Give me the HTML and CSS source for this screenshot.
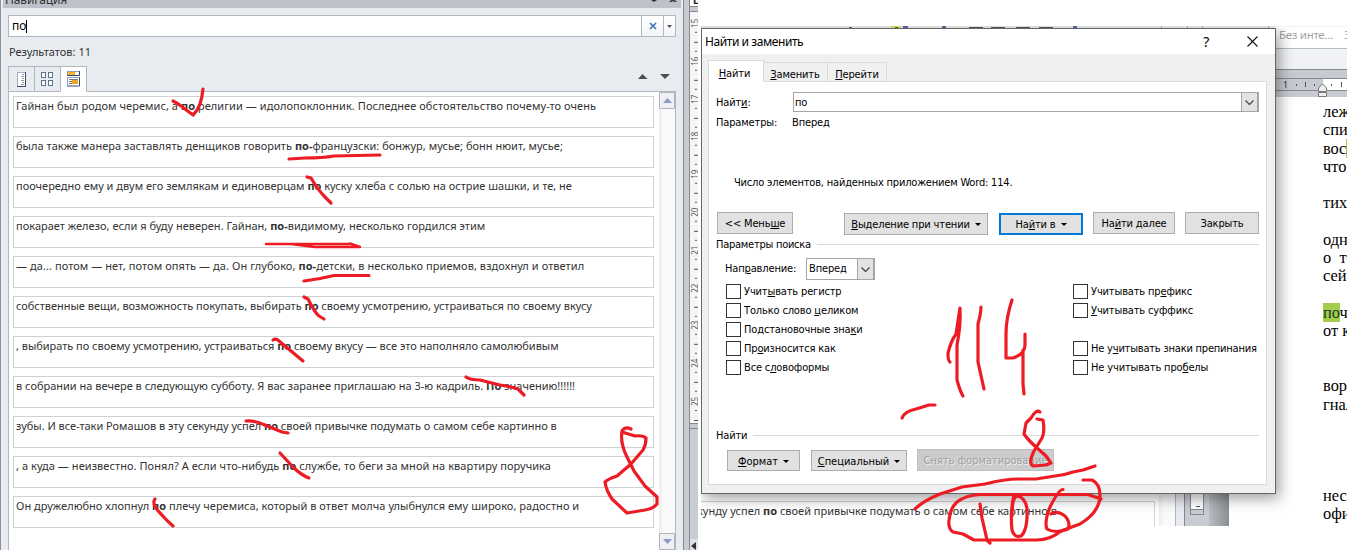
FILE: index.html
```
<!DOCTYPE html>
<html lang="ru">
<head>
<meta charset="utf-8">
<title>Найти и заменить</title>
<link rel="stylesheet" href="styles.css">
</head>
<body>
<div class="desk">
  <section class="navshot">
    <div class="pane">
      <header class="pane-title"><span>Навигация</span><svg width="30" height="8" viewBox="0 0 30 8"><path d="M1 0h6l-3 2z" fill="#333"/><path d="M19 2l2-2h4l2 2h-3l-1-1-1 1z" fill="#444"/></svg></header>
      <div class="search"><span class="query">по</span><span class="clear"><svg width="8" height="8" viewBox="0 0 8 8"><path d="M1 1l6 6M7 1l-6 6" stroke="#3b78ad" stroke-width="1.7"/></svg></span><span class="drop"><svg width="5" height="3" viewBox="0 0 5 3"><path d="M0 0h5L2.500 3z" fill="#555"/></svg></span></div>
      <div class="count">Результатов: 11</div>
      <div class="views">
        <span class="view"><svg width="10" height="17" viewBox="0 0 10 17"><rect x=".5" y="1.500" width="8" height="14" fill="#fff" stroke="#9fb0c8"/><path d="M5 3.500h2M4 5.500h3M5 7.500h2M4 9.500h3M5 11.500h2M4 13.500h3" stroke="#999"/><path d="M8.500 1v14.500H0" fill="none" stroke="#334a6b"/></svg></span>
        <span class="view"><svg width="13" height="15" viewBox="0 0 13 15"><g fill="#fff" stroke="#5d7291"><rect x=".5" y=".5" width="4" height="5"/><rect x="7.500" y=".5" width="4" height="5"/><rect x=".5" y="8.500" width="4" height="5"/><rect x="7.500" y="8.500" width="4" height="5"/></g></svg></span>
        <span class="view on"><svg width="14" height="16" viewBox="0 0 14 16"><rect x=".5" y=".5" width="12" height="4" fill="#fff" stroke="#8ba0bc"/><rect x="1" y="1" width="7" height="3" fill="#f3b32a"/><path d="M12.500 0v4.500H0M12.500 6v9H0" fill="none" stroke="#334a6b"/><path d="M.5 15V6.500h12" fill="none" stroke="#8ba0bc"/><path d="M2 8.500h9M2 10.500h3M2 12.500h3" stroke="#777"/><rect x="5" y="9" width="6" height="4" fill="#eda51c"/></svg></span>
        <span class="arrows"><svg width="33" height="7" viewBox="0 0 33 7"><path d="M0 6L4.500 1 9.500 6z" fill="#4c4f52"/><path d="M22 1h10l-5 5z" fill="#4c4f52"/></svg></span>
      </div>
      <div class="results">
        <div class="cards">
          <p class="card">Гайнан был родом черемис, а <b>по</b> религии — идолопоклонник. Последнее обстоятельство почему-то очень</p>
          <p class="card">была также манера заставлять денщиков говорить <b>по-</b>французски: бонжур, мусье; бонн нюит, мусье;</p>
          <p class="card">поочередно ему и двум его землякам и единоверцам <b>по</b> куску хлеба с солью на острие шашки, и те, не</p>
          <p class="card">покарает железо, если я буду неверен. Гайнан, <b>по-</b>видимому, несколько гордился этим</p>
          <p class="card">— да... потом — нет, потом опять — да. Он глубоко, <b>по-</b>детски, в несколько приемов, вздохнул и ответил</p>
          <p class="card">собственные вещи, возможность покупать, выбирать <b>по</b> своему усмотрению, устраиваться по своему вкусу</p>
          <p class="card">, выбирать по своему усмотрению, устраиваться <b>по</b> своему вкусу — все это наполняло самолюбивым</p>
          <p class="card">в собрании на вечере в следующую субботу. Я вас заранее приглашаю на 3-ю кадриль. <b>По</b> значению!!!!!!</p>
          <p class="card">зубы. И все-таки Ромашов в эту секунду успел <b>по</b> своей привычке подумать о самом себе картинно в</p>
          <p class="card">, а куда — неизвестно. Понял? А если что-нибудь <b>по</b> службе, то беги за мной на квартиру поручика</p>
          <p class="card">Он дружелюбно хлопнул <b>по</b> плечу черемиса, который в ответ молча улыбнулся ему широко, радостно и</p>
        </div>
        <div class="scroll"><span class="sb"><svg width="9" height="5" viewBox="0 0 9 5"><path d="M0 5L4.500 0 9 5z" fill="#8c9bc4"/></svg></span><span class="sb low"><svg width="9" height="5" viewBox="0 0 9 5"><path d="M0 0h9L4.500 5z" fill="#8c9bc4"/></svg></span></div>
      </div>
    </div>
    <div class="split"></div>
    <div class="vruler">
      <div class="corner">L</div>
      <div class="marks"><i>15</i><i>16</i><i>17</i><i>18</i><i>19</i><i>20</i><i>21</i><i>22</i><i>23</i><i>24</i><i>25</i></div>
      <div class="hscroll"><svg width="6" height="8" viewBox="0 0 6 8"><path d="M5 0v8L0 4z" fill="#333"/></svg></div>
    </div>
  </section>

  <section class="docshot">
    <div class="ribbon"><span>Без инте…</span><span class="cut">З</span></div>
    <div class="band"></div>
    <div class="hruler"><span class="gray">1<em></em><em class="tall"></em><em></em></span><span class="white"><em></em><em class="tall"></em></span></div>
    <svg class="indent" width="10" height="15" viewBox="0 0 10 15"><path d="M.5 9.500h8v4h-8zM.5 8.500V5L4.500.8 8.500 5v3.500z" fill="#eee" stroke="#777"/></svg>
    <div class="page">
      <p>леж</p><p>спи</p><p class="tight">вос<mark>п</mark></p><p>что-</p>
      <p class="g1">тих</p><p class="g2">одн</p><p>о&nbsp; те</p><p>сей</p>
      <p class="g3"><mark>по</mark>ч</p><p>от к</p><p class="g4">вор</p><p>гнал</p><p class="g5">нес</p><p>офи</p>
    </div>
  </section>

  <section class="strip">
    <div class="strip-card">кунду успел <b>по</b> своей привычке подумать о самом себе картинно в</div>
    <div class="strip-scroll"></div><div class="strip-gap"></div>
    <div class="strip-edge"><div class="strip-ruler"></div></div><div class="strip-shade"></div>
  </section>

  <svg class="sliver" width="574" height="3" viewBox="0 0 574 3"><rect width="574" height="3" fill="#dcdcdc"/><path d="M190 0h10v3h-10z" fill="#d5d85a"/><path d="M194 2h3M268 2h14M290 2h14M315 2h14M338 2h14" stroke="#222" stroke-width="1.500"/><path d="M148 2h3M202 1h5M241 1h4M372 1h4" stroke="#4c6199" stroke-width="2"/><path d="M460.500 0v3M486.500 0v3M501.500 0v3M567.500 0v3" stroke="#999"/></svg>

  <section class="dialog">
    <header class="title"><span>Найти и заменить</span><span class="help">?</span><svg width="11" height="11" viewBox="0 0 11 11"><path d="M.5.5l10 10M10.500.5l-10 10" stroke="#111" stroke-width="1.100"/></svg></header>
    <nav class="tabs"><span class="tab on"><u>Н</u>айти</span><span class="tab"><u>З</u>аменить</span><span class="tab"><u>П</u>ерейти</span></nav>
    <div class="panel">
      <div class="find"><label>Найт<u>и</u>:</label><div class="combo"><span>по</span><span class="chev"><svg width="9" height="5" viewBox="0 0 9 5"><path d="M.5.5l4 4 4-4" fill="none" stroke="#444" stroke-width="1.200"/></svg></span></div></div>
      <div class="params"><label>Параметры:</label><span>Вперед</span></div>
      <div class="found">Число элементов, найденных приложением Word: 114.</div>
      <div class="buttons">
        <span class="btn less">&lt;&lt; Мень<u>ш</u>е</span><span class="btn reading"><u>В</u>ыделение при чтении<i class="tri"></i></span><span class="btn findin">На<u>й</u>ти в<i class="tri"></i></span><span class="btn next">На<u>й</u>ти далее</span><span class="btn close">Закрыть</span>
      </div>
      <div class="legend opts">Параметры поиска</div>
      <div class="direction"><label>Нап<u>р</u>авление:</label><div class="combo small"><span>Вперед</span><span class="chev"><svg width="9" height="5" viewBox="0 0 9 5"><path d="M.5.5l4 4 4-4" fill="none" stroke="#444" stroke-width="1.200"/></svg></span></div></div>
      <div class="checks">
        <div class="col"><label>Учит<u>ы</u>вать регистр</label><label>Только слово <u>ц</u>еликом</label><label>Подстановочные зна<u>к</u>и</label><label>Пр<u>о</u>износится как</label><label>Все с<u>л</u>овоформы</label></div>
        <div class="col"><label>Учитывать пр<u>е</u>фикс</label><label><u>У</u>читывать суффикс</label><label class="skip">Не у<u>ч</u>итывать знаки препинания</label><label>Не учитывать про<u>б</u>елы</label></div>
      </div>
      <div class="legend bottom">Найти</div>
      <div class="formats"><span class="btn format"><u>Ф</u>ормат<i class="tri"></i></span><span class="btn special"><u>С</u>пециальный<i class="tri"></i></span><span class="btn off">Снять форматирование</span></div>
    </div>
  </section>

  <svg class="ink" width="1347" height="550" viewBox="0 0 1347 550">
    <path d="M173 101Q177 103 181 106L193 115Q198 110 200 104Q202 98 203 89"/>
    <path d="M289 159L305 158Q323 158 334 156L380 155"/>
    <path d="M307 177L311 178Q318 190 325 197L331 203"/>
    <path d="M266 244H350M291 244L315 247H360L350 243.500" stroke-width="2.500"/>
    <path d="M304 281L320 278.500 334 275.500H369"/>
    <path d="M304 297L308 299Q315 313 319 316L324 319"/>
    <path d="M273 340Q276 338 279 341L303 361"/>
    <path d="M466 377Q470 380 480 380L500 385Q513 387 518 389L524 395"/>
    <path d="M246 421Q253 420 265 425L282 432 288 433"/>
    <path d="M280 453L293 467Q301 475 309 478"/>
    <path d="M155 499Q151 504 161 514 166 520 173 526"/>
    <path d="M631 429Q625 426 622 431 620 443 627 457L634 471 645 486 657 497V504Q653 509 645 510L627 513 612 499Q606 490 605 482 608 479 617 476L631 464 643 450Q646 445 646 438 643 435 635 436L622 432"/>
    <path d="M950 362Q948 361 948 353 951 341 956 334L960 308Q961 325 957 345V380Q960 391 963 396"/>
    <path d="M981 307Q981 313 978 324V362L984 389"/>
    <path d="M1012 300Q1006 318 1006 334V358H1013Q1025 354 1025 345V334M1023 350V384L1024 394"/>
    <path d="M902 418Q905 411 916 409L929 405H935"/>
    <path d="M1040 412Q1036 409 1031 418L1026 423 1024 434Q1028 440 1036 447L1046 456 1051 463 1046 465 1033 466Q1028 463 1034 451L1042 438Q1045 432 1043 420L1037 419"/>
    <path d="M915 509Q923 501 940 494L962 487 985 484Q1005 479 1018 479H1036L1055 476Q1065 475 1073 472L1083 470 1095 466"/>
    <path d="M1083 480H1092Q1100 484 1100 495 1100 512 1080 524L1061 531Q1050 540 1037 540H974L963 534 953 532Q948 529 949 520 950 508 957 502 966 495 980 494.500H1088L1101 499"/>
    <path d="M980 504L982 518 987 540 990 543"/>
    <path d="M1014 495Q1010 511 1012 530 1014 538 1021 536 1028 530 1027 508 1025 498 1018 496 1012 496 1012 516"/>
    <path d="M1063 489.500Q1059 489 1050 507 1044 522 1047 529 1055 534 1068 529 1071 523 1065 516 1057 510 1051 514"/>
  </svg>
</div>
</body>
</html>
```
FILE: styles.css
```
* { box-sizing: border-box; }
body { margin: 0; background: #fff; }
p { margin: 0; }
.desk { position: relative; width: 1347px; height: 550px; overflow: hidden; white-space: nowrap; font-family: "Noto Sans", sans-serif; font-size: 11px; color: #333; }
.navshot { position: absolute; left: 0; top: 0; width: 698px; height: 550px; display: flex; overflow: hidden; background: #e8ebf0; }
.pane { width: 683px; border-left: 1px solid #8c9098; padding: 0 8px 0 7px; }
.pane-title { display: flex; justify-content: space-between; height: 8px; margin: 0 -6px 0 -5px; padding: 0 1px 0 2px; background: #bdc1c9; font-size: 12px; line-height: 12px; }
.pane-title span { margin-top: -6px; letter-spacing: -.15px; }
.search { display: flex; height: 22px; margin-top: 7px; width: 668px; border: 1px solid #b2b6bd; background: #fff; }
.query { flex: 1; padding-left: 3px; font-size: 12px; line-height: 20px; color: #000; }
.query::after { content: ""; display: inline-block; width: 1px; height: 13px; background: #000; vertical-align: -3px; }
.clear, .drop { display: flex; align-items: center; justify-content: center; border-left: 1px solid #b2b6bd; background: linear-gradient(#fff, #f3f4f6); }
.clear { width: 22px; }
.drop { width: 12px; }
.count { height: 29px; line-height: 30px; padding-left: 1px; }
.views { display: flex; height: 26px; width: 668px; position: relative; z-index: 1; margin-bottom: -1px; }
.view { width: 27px; margin-right: -1px; display: flex; align-items: center; justify-content: center; border: 1px solid #b2b6bd; }
.view.on { background: #fff; border-bottom-color: #fff; }
.arrows { margin-left: auto; margin-right: 5px; padding-top: 2px; }
.results { display: flex; width: 668px; height: 459px; border: 1px solid #b2b6bd; border-bottom: 0; background: #fff; }
.cards { width: 650px; padding: 4px 0 0 4px; }
.card { width: 641px; height: 32px; margin-bottom: 8px; border: 1px solid #d0d1d5; padding-left: 2px; line-height: 17px; }
.card:nth-child(1) { letter-spacing: .06px; }
.card:nth-child(2) { letter-spacing: .03px; }
.card:nth-child(4) { letter-spacing: .02px; }
.card:nth-child(5) { letter-spacing: .07px; }
.card:nth-child(6) { letter-spacing: -.02px; }
.card:nth-child(7) { letter-spacing: -.03px; }
.card:nth-child(9) { letter-spacing: -.02px; }
.card:nth-child(10) { letter-spacing: .06px; }
.card:nth-child(11) { letter-spacing: .04px; }
.scroll { width: 16px; background: linear-gradient(90deg, #ececee, #fafafa 30%); display: flex; flex-direction: column; justify-content: space-between; }
.sb { height: 17px; border: 1px solid #b0b3ba; border-radius: 1px; background: #eff0f3; display: flex; align-items: center; justify-content: center; }
.split { width: 6px; border-left: 1px solid #858a90; background: #c7cbd1; }
.vruler { width: 9px; border-left: 1px solid #858a90; background: #c9cdd3; }
.corner { height: 12px; padding-left: 3px; font-size: 10px; line-height: 0; font-weight: bold; border-bottom: 1px solid #858a90; background: linear-gradient(#fff 6px, #858a90 6px, #858a90 7px, #c7cbd1 7px); color: #222; }
.marks { height: 417px; border-bottom: 1px solid #858a90; background: linear-gradient(#f5f5f5 411px, #858a90 411px, #858a90 412px, #c7cbd1 412px); padding-top: 3px; }
.marks i { display: block; height: 37.8px; width: 7px; margin-left: 1px; font: 8px/7px "Noto Sans", sans-serif; writing-mode: vertical-rl; transform: rotate(180deg); text-align: right; color: #555; background: linear-gradient(#555, #555) 1px 20px / 2px 1px no-repeat, linear-gradient(#555, #555) 0 10px / 4px 1px no-repeat, linear-gradient(#555, #555) 1px 1px / 2px 1px no-repeat; padding-bottom: 4px; }
.marks i:last-child { height: 30px; background-position: 1px 12px, 0 2px, 1px 40px; }
.hscroll { margin-top: 110px; height: 12px; background: #dfe2e7; padding: 3px 0 0 1px; line-height: 0; }

.docshot { position: absolute; left: 1275px; top: 26px; width: 72px; height: 524px; overflow: hidden; background: #fff; }
.ribbon { height: 23px; border-bottom: 1px solid #b8bbc0; border-top: 1px solid #f0f0f0; padding: 0 0 0 4px; line-height: 15px; font-size: 11.5px; letter-spacing: -.3px; color: #a3a3a3; display: flex; gap: 11px; }
.band { height: 21px; background: #f1f2f5; border-bottom: 1px solid #858a90; }
.hruler { height: 27px; border-top: 8px solid #c7cbd1; border-bottom: 6px solid #c7cbd1; display: flex; font-size: 9px; line-height: 13px; }
.hruler span { display: flex; align-items: center; gap: 9px; border-top: 1px solid #858a90; border-bottom: 1px solid #858a90; height: 13px; }
.gray { width: 48px; padding-left: 8px; background: #c7cbd1; }
.hruler .gray { gap: 8px; }
.white { flex: 1; padding-left: 8px; background: #fff; }
.hruler em { width: 1px; height: 2px; background: #555; }
.hruler em.tall { height: 5px; }
.indent { position: absolute; left: 43px; top: 57px; }
.page { padding: 6px 0 0 48px; font: 16.4px/18.35px "Liberation Serif", serif; color: #000; }
.tight { letter-spacing: -.15px; }
mark { background: #a3cd48; color: #173a2c; }
.g1, .g2, .g3 { margin-top: 18px; }
.g4 { margin-top: 37px; }
.g5 { margin-top: 73px; }

.strip { position: absolute; left: 701px; top: 490px; width: 528px; height: 36px; display: flex; overflow: hidden; background: #fff; }
.strip-card { width: 454px; height: 36px; margin-top: 11px; border: 1px solid #d0d1d5; border-left: 0; line-height: 18px; text-indent: -4px; }
.strip-scroll { width: 17px; margin-left: 4px; background: linear-gradient(90deg, #ececee, #fafafa 30%); border-right: 1px solid #b2b6bd; }
.strip-gap { width: 8px; background: #e8ebf0; }
.strip-edge { width: 25px; padding-left: 5px; border-left: 1px solid #858a90; background: #c9cdd3; }
.strip-ruler { width: 14px; height: 25px; border: 1px solid #858a90; background: linear-gradient(#555, #555) 5px 15px / 4px 1px no-repeat, linear-gradient(#fff 18px, #858a90 18px, #858a90 19px, #c9cdd3 19px); }
.strip-shade { flex: 1; background: linear-gradient(90deg, #b9bdc3, #8b8f92); }
.sliver { position: absolute; left: 701px; top: 26px; }

.dialog { position: absolute; left: 701px; top: 28px; width: 575px; height: 466px; border: 1px solid #646865; background: #f0f0f0; box-shadow: 3px 4px 14px rgba(0,0,0,.4); font: 11px/14px "DejaVu Sans Condensed", "Noto Sans", sans-serif; letter-spacing: -.15px; color: #000; clip-path: inset(0 -24px -24px 0); }
.title { display: flex; align-items: center; height: 25px; background: #fff; padding: 0 17px 0 3px; font: 12px/20px "Noto Sans", sans-serif; letter-spacing: -.43px; }
.help { margin-left: auto; margin-right: 38px; font-size: 14px; }
.tabs { display: flex; align-items: flex-end; height: 28px; padding-left: 6px; position: relative; z-index: 1; }
.tab { height: 20px; line-height: 23px; text-align: center; border: 1px solid #dadada; border-left: 0; }
.tab.on { width: 56px; height: 22px; background: #fff; border: 1px solid #dadada; border-bottom-color: #fff; padding-right: 3px; line-height: 25px; }
.tab:nth-child(2) { width: 64px; padding-right: 1px; }
.tab:nth-child(3) { width: 59px; }
.panel { margin: -1px 8px 0 6px; width: 559px; height: 404px; background: #fff; border: 1px solid #dadada; padding: 10px 7px 0; }
.find { display: flex; height: 20px; line-height: 22px; }
.find label, .params label { width: 77px; }
.combo { display: flex; flex: 1; border: 1px solid #a5a5a8; line-height: 20px; padding-left: 1px; }
.chev { margin-left: auto; width: 17px; border: 1px solid #a5a5a8; border-width: 0 1px; background: #e3e3e3; display: flex; align-items: center; justify-content: center; }
.params { display: flex; margin-top: 4px; height: 14px; }
.params span { margin-left: -1px; }
.found { margin: 46px 0 0 18px; height: 14px; letter-spacing: -.19px; }
.buttons { display: flex; margin: 22px 0 0 1px; height: 23px; }
.btn { height: 22px; line-height: 21px; display: block; text-align: center; border: 1px solid #adadad; background: #e1e1e1; flex: none; }
.tri { display: inline-block; border: 3px solid transparent; border-top: 3.500px solid #000; border-bottom: 0; margin-left: 5px; vertical-align: 2px; }
.less { width: 76px; }
.reading { width: 144px; margin: 1px 0 0 51px; letter-spacing: -.15px; }
.findin { width: 84px; margin: 1px 0 0 11px; border: 2px solid #0078d7; line-height: 19px; }
.next { width: 82px; margin-left: 10px; }
.close { width: 74px; margin-left: 10px; }
.legend { display: flex; align-items: center; gap: 6px; height: 14px; }
.legend::after { content: ""; flex: 1; height: 1px; margin-top: -1px; background: #dadada; }
.opts { margin-top: 3px; letter-spacing: -.25px; }
.direction { display: flex; margin: 6px 0 0 9px; height: 22px; line-height: 22px; }
.direction label { width: 81px; }
.combo.small { flex: none; width: 69px; padding-left: 2px; }
.checks { display: flex; margin: 1.500px 0 0 10px; }
.col { flex: none; width: 347px; display: flex; flex-direction: column; }
.col label { height: 19.1px; line-height: 19px; display: flex; align-items: center; white-space: pre; }
.col label::before { content: ""; flex: none; width: 13px; height: 13px; border: 1px solid #333; margin-right: 3px; background: #fff; }
.col label.skip { margin-top: 19px; letter-spacing: -.2px; }
.bottom { margin-top: 52.500px; }
.formats { display: flex; margin: 6px 0 0 11px; letter-spacing: 0; }
.formats .btn { height: 21px; margin-top: 1px; }
.format { width: 73px; }
.formats .special { width: 96px; margin-left: 11px; }
.formats .off { width: 137px; height: 22px; margin: 0 0 0 10px; background: #ccc; border-color: #bfbfbf; color: #a0a0a0; text-shadow: 1px 1px #eee; }
.ink { position: absolute; left: 0; top: 0; fill: none; stroke: #ed1c24; stroke-width: 3.200; stroke-linecap: round; stroke-linejoin: round; }
```
